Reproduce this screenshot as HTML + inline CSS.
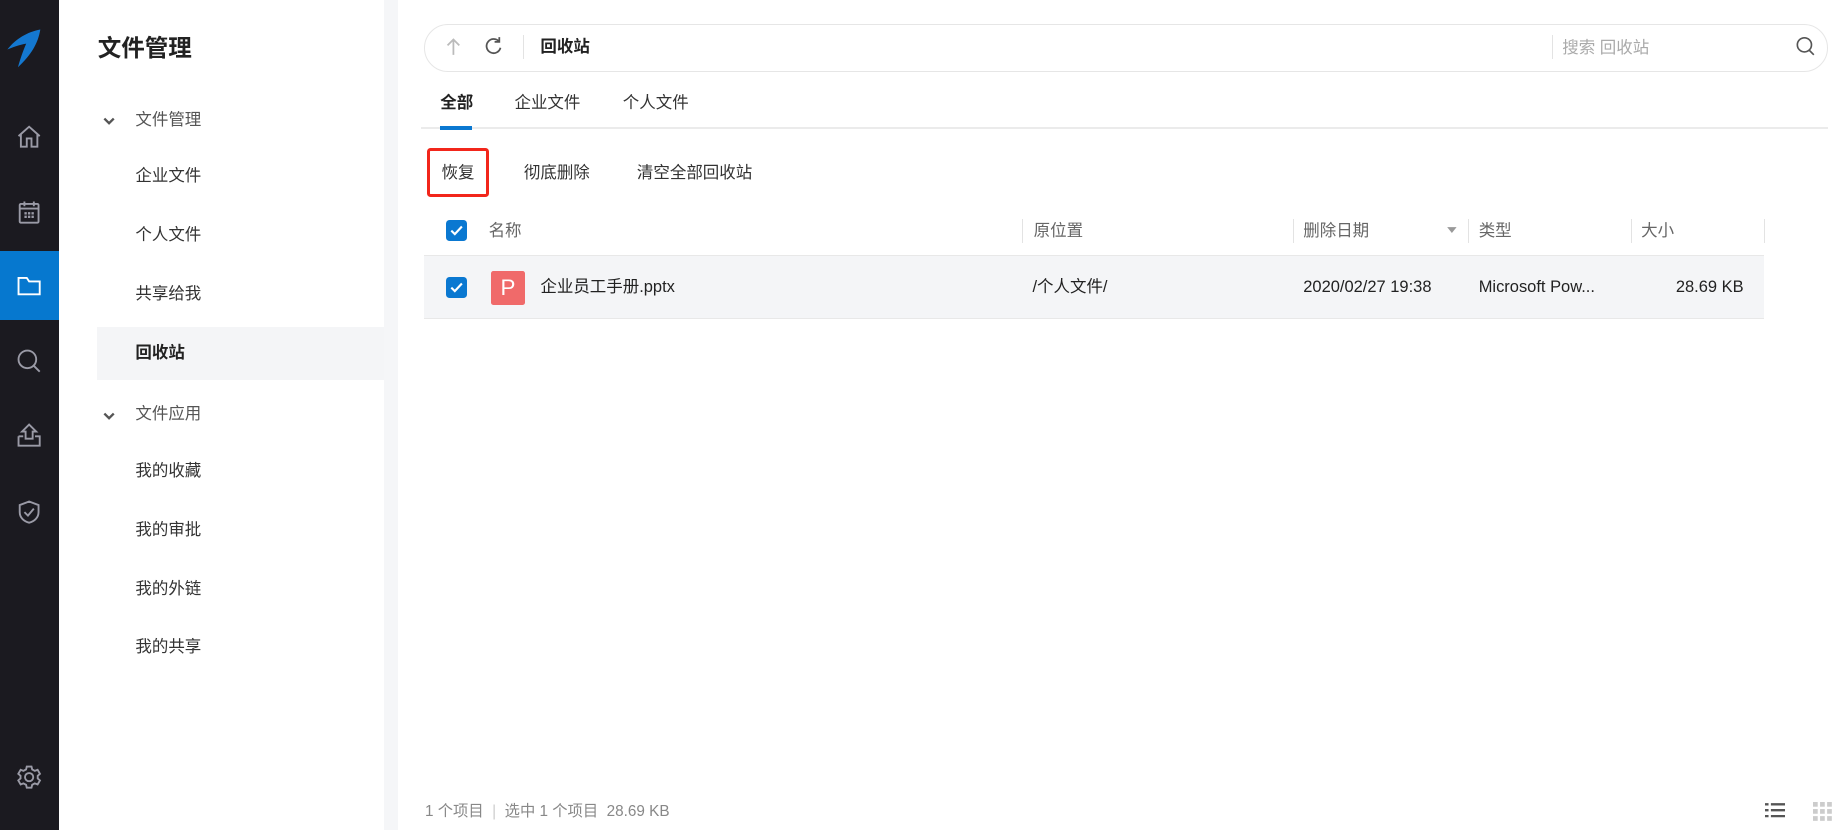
<!DOCTYPE html>
<html><head><meta charset="utf-8"><style>
*{margin:0;padding:0;box-sizing:border-box}
html,body{width:1846px;height:830px;overflow:hidden;background:#fff}
#z{zoom:1.17730;width:1568px;height:705px;position:relative;font-family:"Liberation Sans","Noto Sans CJK SC",sans-serif;color:#333;font-size:14px}
.a{position:absolute;white-space:nowrap}
.rail{left:0;top:0;width:50px;height:705px;background:#1b1a20}
.ic{position:absolute;left:13px;width:24px;height:24px}
.gap{left:326px;top:0;width:12px;height:705px;background:#f5f6f8}
.t{line-height:24px}
.cb{width:18px;height:18px;background:#0a78d1;border-radius:3px}
.sep{width:1px;height:20px;background:#e3e3e3}
</style></head><body><div id="z">
<div class="a rail">
<svg class="ic" style="left:4px;top:22px;width:32px;height:44px" viewBox="0 0 32 44"><path d="M2 20 C9 11 19 5 30 3 C28 15 22 25 11 35 C13 28 15 22 18 15 C12 16 7 18 2 20Z" fill="#1478d0"/></svg>
<svg class="ic" style="top:104px" viewBox="0 0 24 24" fill="none" stroke="#9a9aa6" stroke-width="1.6"><path d="M3 12 L12 4 L21 12 M5 10 V21 H10 V14 H14 V21 H19 V10"/></svg>
<svg class="ic" style="top:168px" viewBox="0 0 24 24" fill="none" stroke="#9a9aa6" stroke-width="1.6"><rect x="4" y="5" width="16" height="16" rx="1"/><path d="M4 9H20M8 3V7M16 3V7"/><path d="M8 13h2M11 13h2M14 13h2M8 16h2M11 16h2M14 16h2" stroke-width="2"/></svg>
<div class="a" style="left:0;top:213px;width:50px;height:59px;background:#0678cf"></div>
<svg class="ic" style="top:231px" viewBox="0 0 24 24" fill="none" stroke="#fff" stroke-width="1.6"><path d="M3 5H10L12 8H21V19H3Z"/></svg>
<svg class="ic" style="top:295px" viewBox="0 0 24 24" fill="none" stroke="#9a9aa6" stroke-width="1.6"><circle cx="10.5" cy="10.5" r="7.5"/><path d="M16 16L21 21"/></svg>
<svg class="ic" style="top:358px" viewBox="0 0 24 24" fill="none" stroke="#9a9aa6" stroke-width="1.6"><path d="M12 3L6 9H9V15H15V9H18Z M3 13V21H21V13H17 M3 13H7"/></svg>
<svg class="ic" style="top:423px" viewBox="0 0 24 24" fill="none" stroke="#9a9aa6" stroke-width="1.6"><path d="M12 3L20 6V12C20 17 16 20 12 21C8 20 4 17 4 12V6Z"/><path d="M8 12L11 15L16 9"/></svg>
<svg class="ic" style="top:648px" viewBox="0 0 24 24" fill="none" stroke="#9a9aa6" stroke-width="1.6"><circle cx="12" cy="12" r="3.5"/><path d="M10 3h4l.6 2.5 2.2 1.2 2.4-.9 2 3.4-1.9 1.7v2.2l1.9 1.7-2 3.4-2.4-.9-2.2 1.2L14 21h-4l-.6-2.5-2.2-1.2-2.4.9-2-3.4 1.9-1.7v-2.2L2.8 9.2l2-3.4 2.4.9 2.2-1.2Z"/></svg>
</div>
<div class="a gap"></div>
<div class="a" style="left:83px;top:28px;font-size:20px;font-weight:bold;color:#222;line-height:26px">文件管理</div>
<svg class="a" style="left:87px;top:98px" width="12" height="10" viewBox="0 0 12 10"><path d="M2 3L6 7L10 3" fill="none" stroke="#555" stroke-width="2"/></svg>
<div class="a t" style="left:115px;top:90px;color:#555">文件管理</div>
<div class="a t" style="left:115px;top:138px">企业文件</div>
<div class="a t" style="left:115px;top:188px">个人文件</div>
<div class="a t" style="left:115px;top:238px">共享给我</div>
<div class="a" style="left:82px;top:278px;width:244px;height:45px;background:#f4f5f7"></div>
<div class="a t" style="left:115px;top:288px;font-weight:bold;color:#222">回收站</div>
<svg class="a" style="left:87px;top:348px" width="12" height="10" viewBox="0 0 12 10"><path d="M2 3L6 7L10 3" fill="none" stroke="#555" stroke-width="2"/></svg>
<div class="a t" style="left:115px;top:340px;color:#555">文件应用</div>
<div class="a t" style="left:115px;top:388px">我的收藏</div>
<div class="a t" style="left:115px;top:438px">我的审批</div>
<div class="a t" style="left:115px;top:488px">我的外链</div>
<div class="a t" style="left:115px;top:538px">我的共享</div>

<div class="a" style="left:360px;top:20px;width:1193px;height:41px;border:1px solid #e6e6e6;border-radius:21px"></div>
<svg class="a" style="left:377px;top:31px" width="16" height="18" viewBox="0 0 16 18"><path d="M8 16V3M3 8L8 3L13 8" fill="none" stroke="#bbb" stroke-width="1.5"/></svg>
<svg class="a" style="left:411px;top:31px" width="16" height="16" viewBox="0 0 16 16"><path d="M13 5A6 6 0 1 0 14 10M13 1V5H9" fill="none" stroke="#555" stroke-width="1.5"/></svg>
<div class="a" style="left:444px;top:30px;width:1px;height:20px;background:#e3e3e3"></div>
<div class="a t" style="left:459px;top:28px;font-weight:bold;color:#222">回收站</div>
<div class="a" style="left:1318px;top:30px;width:1px;height:20px;background:#e3e3e3"></div>
<div class="a t" style="left:1327px;top:29px;color:#aaa">搜索 回收站</div>
<svg class="a" style="left:1525px;top:31px" width="18" height="18" viewBox="0 0 18 18"><circle cx="8" cy="7.5" r="6" fill="none" stroke="#555" stroke-width="1.4"/><path d="M12 12L16 16" stroke="#555" stroke-width="1.4"/></svg>

<div class="a t" style="left:374px;top:76px;font-weight:bold;color:#222">全部</div>
<div class="a t" style="left:437px;top:76px">企业文件</div>
<div class="a t" style="left:529px;top:76px">个人文件</div>
<div class="a" style="left:358px;top:108px;width:1195px;height:2px;background:#ebebeb"></div>
<div class="a" style="left:374px;top:107px;width:27px;height:3px;background:#0a78d1"></div>

<div class="a" style="left:363px;top:126px;width:52px;height:41px;border:3px solid #f2261b;border-radius:3px"></div>
<div class="a t" style="left:375px;top:135px">恢复</div>
<div class="a t" style="left:445px;top:135px">彻底删除</div>
<div class="a t" style="left:541px;top:135px">清空全部回收站</div>

<div class="a cb" style="left:379px;top:187px"></div>
<svg class="a" style="left:379px;top:187px" width="18" height="18" viewBox="0 0 18 18"><path d="M4.5 9L7.5 12L13.5 5.5" fill="none" stroke="#fff" stroke-width="1.8"/></svg>
<div class="a t" style="left:415px;top:184px;color:#666">名称</div>
<div class="a sep" style="left:868px;top:186px"></div>
<div class="a t" style="left:878px;top:184px;color:#666">原位置</div>
<div class="a sep" style="left:1098px;top:186px"></div>
<div class="a t" style="left:1107px;top:184px;color:#666">删除日期</div>
<svg class="a" style="left:1228px;top:192px" width="10" height="8" viewBox="0 0 10 8"><path d="M1 1H9L5 6Z" fill="#999"/></svg>
<div class="a sep" style="left:1247px;top:186px"></div>
<div class="a t" style="left:1256px;top:184px;color:#666">类型</div>
<div class="a sep" style="left:1385px;top:186px"></div>
<div class="a t" style="left:1394px;top:184px;color:#666">大小</div>
<div class="a sep" style="left:1498px;top:186px"></div>

<div class="a" style="left:360px;top:217px;width:1138px;height:54px;background:#f4f5f7;border-top:1px solid #e8e8e8;border-bottom:1px solid #e8e8e8"></div>
<div class="a cb" style="left:379px;top:235px"></div>
<svg class="a" style="left:379px;top:235px" width="18" height="18" viewBox="0 0 18 18"><path d="M4.5 9L7.5 12L13.5 5.5" fill="none" stroke="#fff" stroke-width="1.8"/></svg>
<div class="a" style="left:417px;top:230px;width:29px;height:29px;background:#f06a6a;border-radius:2px;color:#fff;font-size:19px;line-height:29px;text-align:center">P</div>
<div class="a t" style="left:459px;top:232px;color:#222">企业员工手册.pptx</div>
<div class="a t" style="left:877px;top:232px;color:#222">/个人文件/</div>
<div class="a t" style="left:1107px;top:232px;color:#222">2020/02/27 19:38</div>
<div class="a t" style="left:1256px;top:232px;color:#222">Microsoft Pow...</div>
<div class="a t" style="left:1400px;top:232px;width:81px;text-align:right;color:#222">28.69 KB</div>

<div class="a" style="left:361px;top:680px;font-size:13px;color:#888;line-height:18px">1 个项目 <span style="color:#ccc">&nbsp;|&nbsp;</span> 选中 1 个项目 &nbsp;28.69 KB</div>
<svg class="a" style="left:1499px;top:681px" width="18" height="14" viewBox="0 0 18 14"><path d="M0 2H3M5 2H17M0 7H3M5 7H17M0 12H3M5 12H17" stroke="#555" stroke-width="2"/></svg>
<svg class="a" style="left:1540px;top:681px" width="16" height="16" viewBox="0 0 16 16" fill="#ccc"><rect x="0" y="0" width="4" height="4"/><rect x="6" y="0" width="4" height="4"/><rect x="12" y="0" width="4" height="4"/><rect x="0" y="6" width="4" height="4"/><rect x="6" y="6" width="4" height="4"/><rect x="12" y="6" width="4" height="4"/><rect x="0" y="12" width="4" height="4"/><rect x="6" y="12" width="4" height="4"/><rect x="12" y="12" width="4" height="4"/></svg>
</div></body></html>
